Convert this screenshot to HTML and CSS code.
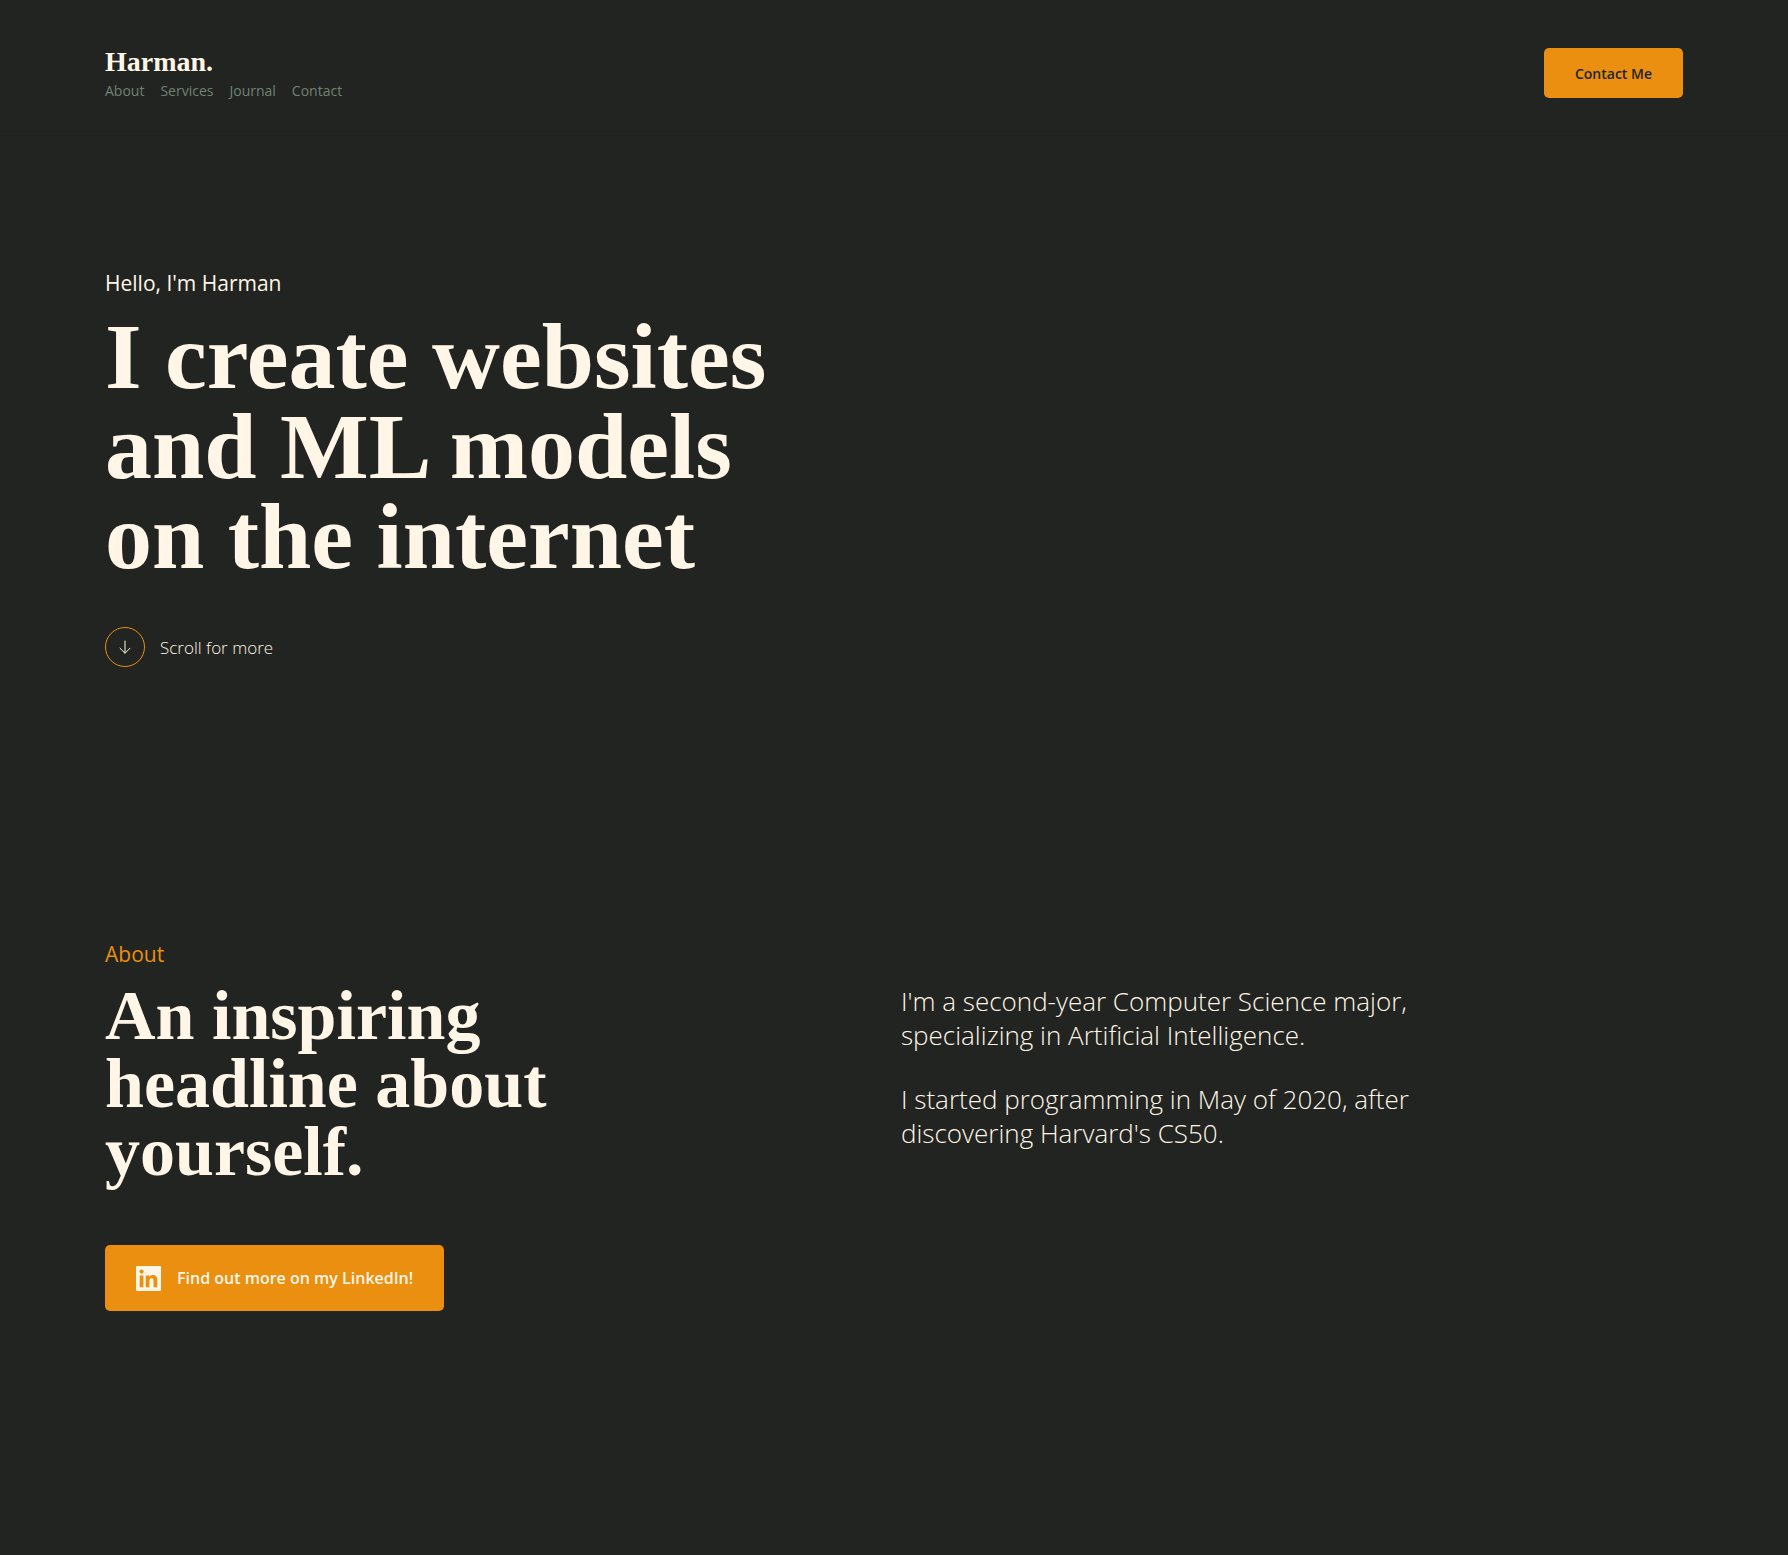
FILE: index.html
```html
<!DOCTYPE html>
<html lang="en">
<head>
  <meta charset="utf-8">
  <meta name="viewport" content="width=device-width, initial-scale=1">
  <title>Harman.</title>
  <link rel="stylesheet" href="styles.css">
</head>
<body>
  <header class="site-header">
    <div class="brand">
      <a class="logo" href="#top">Harman.</a>
      <nav class="nav" aria-label="Main">
        <a href="#about">About</a>
        <a href="#services">Services</a>
        <a href="#journal">Journal</a>
        <a href="#contact">Contact</a>
      </nav>
    </div>
    <button class="btn btn-contact" type="button">Contact Me</button>
  </header>

  <main id="top">
    <section class="section">
      <p class="eyebrow">Hello, I'm Harman</p>
      <h1 class="hero-title">I create websites<br>and ML models<br>on the internet</h1>
      <a class="scroll" href="#about">
        <span class="scroll-ring">
          <svg width="16" height="16" viewBox="0 0 16 16" fill="none" stroke="currentColor" stroke-linecap="round" stroke-linejoin="round" aria-hidden="true">
            <path d="M8 2v12M3 9.200l5 5 5-5"/>
          </svg>
        </span>
        Scroll for more
      </a>
    </section>

    <section class="section about" id="about">
      <div>
        <p class="eyebrow eyebrow-accent">About</p>
        <h2 class="about-title">An inspiring<br>headline about<br>yourself.</h2>
        <button class="btn btn-linkedin" type="button">
          <svg width="25" height="25" viewBox="0 0 24 24" fill="currentColor" aria-hidden="true">
            <path d="M20.447 20.452h-3.554v-5.569c0-1.328-.027-3.037-1.852-3.037-1.853 0-2.136 1.445-2.136 2.939v5.667H9.351V9h3.414v1.561h.046c.477-.9 1.637-1.85 3.370-1.850 3.601 0 4.267 2.370 4.267 5.455v6.286zM5.337 7.433a2.062 2.062 0 1 1 0-4.125 2.062 2.062 0 0 1 0 4.125zm1.782 13.019H3.555V9h3.564v11.452zM23 0H1a1 1 0 0 0-1 1v22a1 1 0 0 0 1 1h22a1 1 0 0 0 1-1V1a1 1 0 0 0-1-1z"/>
          </svg>
          Find out more on my LinkedIn!
        </button>
      </div>
      <div class="about-text">
        <p>I'm a second-year Computer Science major, specializing in Artificial Intelligence.</p>
        <p>I started programming in May of 2020, after discovering Harvard's CS50.</p>
      </div>
    </section>
  </main>
</body>
</html>
```
FILE: styles.css
```css
:root {
  --bg: #222421;
  --line: #1e201d;
  --cream: #fff6e7;
  --accent: #ea8f10;
  --muted: #6f8273;
  --gutter: 105px;
  --sans: "Open Sans", "Noto Sans", sans-serif;
  --serif: "Liberation Serif", serif;
}

* {
  box-sizing: border-box;
  margin: 0;
}

body {
  background: var(--bg);
  color: var(--cream);
  font-family: var(--sans);
}

a {
  color: inherit;
  text-decoration: none;
}

svg {
  display: block;
}

.site-header {
  display: flex;
  align-items: center;
  justify-content: space-between;
  padding: 45px var(--gutter) 30px;
  border-bottom: 1px solid var(--line);
}

.brand {
  display: flex;
  flex-direction: column;
  align-items: flex-start;
  gap: 2px;
}

.logo {
  font: 700 28px/34px var(--serif);
}

.nav {
  display: flex;
  gap: 16px;
  color: var(--muted);
  font-size: 14px;
  line-height: 20px;
}

.btn {
  border: 0;
  border-radius: 5px;
  background: var(--accent);
  font-family: var(--sans);
  font-weight: 600;
  cursor: pointer;
}

.btn-contact {
  height: 50px;
  padding: 0 31px;
  color: var(--bg);
  font-size: 14px;
}

.btn-linkedin {
  display: flex;
  align-items: center;
  gap: 16px;
  height: 66px;
  margin-top: 59px;
  padding: 0 31px;
  color: var(--cream);
  font-size: 16px;
}

.section {
  padding: 136px var(--gutter);
}

.eyebrow {
  margin-bottom: 13px;
  font-size: 21px;
  line-height: 30px;
}

.eyebrow-accent {
  color: var(--accent);
}

.hero-title {
  font: 700 94px/90px var(--serif);
}

.scroll {
  display: inline-flex;
  align-items: center;
  gap: 15px;
  margin-top: 46px;
  font-size: 17px;
  font-weight: 300;
  vertical-align: top;
}

.scroll-ring {
  display: grid;
  place-items: center;
  width: 40px;
  height: 40px;
  border: 1px solid var(--accent);
  border-radius: 50%;
}

.about {
  display: grid;
  grid-template-columns: 1fr 1fr;
  gap: 14px;
}

.about-title {
  font: 700 70px/68px var(--serif);
}

.about-text {
  display: flex;
  flex-direction: column;
  gap: 30px;
  max-width: 540px;
  padding-top: 45px;
  font-size: 26px;
  font-weight: 300;
  line-height: 34px;
}
```
